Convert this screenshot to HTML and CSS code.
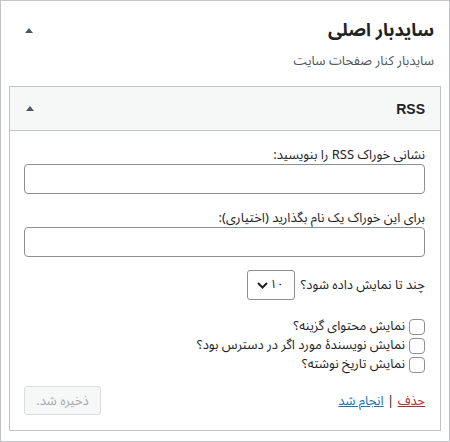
FILE: index.html
```html
<!DOCTYPE html>
<html lang="fa" dir="rtl">
<head>
<meta charset="utf-8">
<link rel="stylesheet" href="styles.css">
</head>
<body>
<div class="sidebar">
  <div class="sidebar-head">
    <h2 class="sidebar-title">سایدبار اصلی</h2>
    <span class="arrow"></span>
  </div>
  <p class="sidebar-desc">سایدبار کنار صفحات سایت</p>
  <div class="widget">
    <div class="widget-head">
      <h3 class="widget-title">RSS</h3>
      <span class="arrow"></span>
    </div>
    <div class="widget-body">
      <label class="field-label">نشانی خوراک RSS را بنویسید:</label>
      <input class="text-input" type="text">
      <label class="field-label">برای این خوراک یک نام بگذارید (اختیاری):</label>
      <input class="text-input" type="text">
      <div class="count-row">
        <span>چند تا نمایش داده شود؟</span>
        <div class="select">
          <span class="select-val">۱۰</span>
          <svg class="chev" width="11" height="7" viewBox="0 0 11 7"><path d="M1 1 L5.5 5.5 L10 1" fill="none" stroke="#1d2327" stroke-width="2"/></svg>
        </div>
      </div>
      <div class="checks">
        <label class="check-row"><span class="cb"></span><span class="check-text">نمایش محتوای گزینه؟</span></label>
        <label class="check-row"><span class="cb"></span><span class="check-text">نمایش نویسندهٔ مورد اگر در دسترس بود؟</span></label>
        <label class="check-row"><span class="cb"></span><span class="check-text">نمایش تاریخ نوشته؟</span></label>
      </div>
      <div class="actions">
        <div class="links"><a class="del" href="#">حذف</a> | <a class="done" href="#">انجام شد</a></div>
        <button class="save" disabled>ذخیره شد.</button>
      </div>
    </div>
  </div>
</div>
</body>
</html>
```
FILE: styles.css
```css
html, body {
  margin: 0;
  padding: 0;
  background: #fff;
}
body {
  font-family: "Noto Sans Arabic", "DejaVu Sans", "Noto Sans", sans-serif;
  font-size: 13px;
  line-height: 18px;
  color: #1d2327;
}
.sidebar {
  box-sizing: border-box;
  width: 450px;
  height: 442px;
  border: 1px solid #c3c4c7;
  padding: 0 8px;
}
.sidebar-head {
  display: flex;
  align-items: center;
  justify-content: space-between;
  padding: 14px 7px 0 16px;
  height: 30px;
}
.sidebar-title {
  margin: 0;
  font-size: 18px;
  line-height: 30px;
  font-weight: 700;
  color: #1d2327;
}
.arrow {
  width: 0;
  height: 0;
  border-left: 4px solid transparent;
  border-right: 4px solid transparent;
  border-bottom: 5px solid #50575e;
}
.sidebar-desc {
  margin: 0;
  padding: 7px 7px 16px 0;
  line-height: 18px;
  color: #50575e;
  font-size: 13px;
}
.widget {
  border: 1px solid #c3c4c7;
  background: #fff;
}
.widget-head {
  display: flex;
  align-items: center;
  justify-content: space-between;
  height: 43px;
  padding: 0 15px 0 16px;
  background: #f6f7f7;
  border-bottom: 1px solid #c3c4c7;
}
.widget-title {
  margin: 0;
  font-size: 14px;
  font-weight: 700;
  font-family: "Liberation Sans", "DejaVu Sans", sans-serif;
}
.widget-body {
  padding: 15px 15px 15px 14px;
  display: flex;
  flex-direction: column;
}
.field-label {
  display: block;
  line-height: 18px;
}
.text-input {
  box-sizing: border-box;
  height: 30px;
  width: 100%;
  border: 1px solid #8c8f94;
  border-radius: 4px;
  margin: 0 0 15px 0;
  background: #fff;
}
.count-row {
  display: flex;
  align-items: center;
  gap: 6px;
  margin-top: -2px;
}
.select {
  box-sizing: border-box;
  flex: 0 0 48px;
  width: 48px;
  height: 30px;
  border: 1px solid #8c8f94;
  border-radius: 3px;
  display: flex;
  align-items: center;
  justify-content: space-between;
  padding: 0 10px 0 9px;
}
.select-val {
  font-size: 12px;
  line-height: 14px;
}
.chev {
  flex: 0 0 auto;
  display: block;
}
.checks {
  display: flex;
  flex-direction: column;
  margin-top: 17px;
}
.check-row {
  display: flex;
  align-items: center;
  gap: 4px;
  height: 19px;
}
.check-text {
  line-height: 15px;
}
.cb {
  box-sizing: border-box;
  width: 16px;
  height: 16px;
  border: 1px solid #8c8f94;
  border-radius: 4px;
  background: #fff;
}
.actions {
  display: flex;
  justify-content: space-between;
  align-items: center;
  margin-top: 12px;
}
.links {
  color: #1d2327;
}
.del {
  color: #b32d2e;
}
.done {
  color: #2271b1;
}
.save {
  box-sizing: border-box;
  width: 77px;
  height: 29px;
  font-family: inherit;
  font-size: 13px;
  background: #f6f7f7;
  border: 1px solid #dcdcde;
  border-radius: 3px;
  color: #a7aaad;
  padding: 0;
}
```
